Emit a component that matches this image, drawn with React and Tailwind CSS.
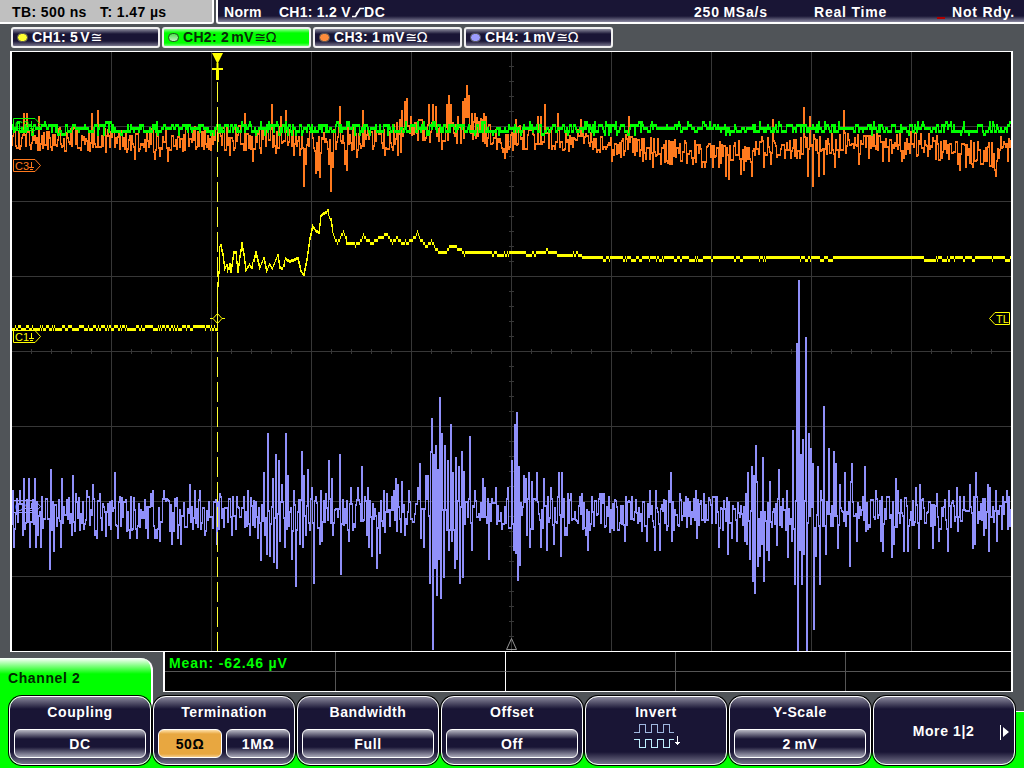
import { clsx } from "clsx";

const PLOT = { left: 12, top: 52, width: 1000, height: 599 };

// [x, y] extremes of each noisy trace, in screen coordinates
const CH4_TOPS = [
  [13, 490], [20, 490], [24, 478], [29, 478], [35, 478], [42, 496], [51, 469], [62, 478], [73, 475], [76, 493], [87, 490],
  [93, 484], [100, 493], [115, 472], [120, 496], [131, 496], [145, 499], [151, 493], [153, 490], [164, 490], [176, 505], [190, 484], [195, 490], [200, 490],
  [216, 499], [220, 493], [237, 496], [248, 490], [264, 472], [268, 433], [273, 478], [276, 454], [279, 460], [282, 484], [286, 433], [288, 475],
  [294, 490], [302, 451], [304, 475], [308, 469], [312, 487], [321, 490], [326, 493], [329, 460], [332, 478], [340, 454],
  [351, 487], [358, 487], [362, 466], [368, 487], [384, 490], [387, 493], [394, 490], [396, 478], [398, 484], [402, 481],
  [409, 490], [418, 487], [420, 463], [426, 475], [428, 475], [431, 451], [432, 418], [434, 454], [436, 445], [438, 469],
  [440, 397], [442, 433], [445, 445], [448, 460], [451, 424], [453, 472], [456, 457], [459, 466], [462, 451], [464, 471],
  [470, 436], [472, 478], [475, 490], [483, 478], [485, 487], [496, 487], [508, 487], [512, 460], [515, 424], [517, 412],
  [519, 466], [524, 475], [526, 478], [529, 472], [532, 481], [537, 472], [544, 478], [551, 487], [559, 472], [562, 472],
  [568, 493], [571, 493], [582, 493], [588, 502], [592, 496], [600, 493], [602, 493], [604, 493], [609, 496], [615, 499], [626, 496], [632, 496],
  [650, 490], [656, 490], [660, 478], [664, 499], [669, 490], [671, 472], [680, 493], [686, 496], [696, 490], [698, 499], [704, 493], [717, 496],
  [732, 478], [737, 481], [746, 493], [748, 472], [752, 466], [754, 475], [756, 445], [757, 481], [760, 487], [763, 457], [764, 460],
  [770, 481], [779, 469], [787, 490], [793, 430], [797, 343], [799, 280], [801, 454], [803, 439], [806, 337],
  [809, 433], [811, 448], [813, 463], [816, 448], [818, 466], [821, 490], [824, 406], [829, 448], [834, 451], [836, 463],
  [840, 484], [845, 472], [851, 481], [852, 463], [858, 502], [865, 466], [871, 499], [876, 490], [882, 496], [888, 496], [896, 478],
  [898, 490], [901, 499], [908, 478], [916, 487], [920, 484], [937, 493], [945, 499], [949, 490], [957, 487], [960, 496], [964, 496], [970, 484], [976, 472],
  [988, 484], [990, 487], [996, 490], [1003, 496], [1007, 490], [1009, 496],
];
const CH4_BOTTOMS = [
  [14, 546], [15, 528], [23, 534], [30, 546], [36, 546], [38, 534], [41, 546], [50, 568], [54, 550], [61, 546], [72, 534], [75, 530],
  [84, 528], [95, 534], [97, 537], [106, 535], [118, 537], [130, 537], [133, 528], [137, 537], [148, 537], [155, 537], [157, 537], [160, 540],
  [172, 543], [178, 537], [181, 543], [193, 528], [205, 534], [217, 543], [232, 534], [250, 534], [258, 537], [261, 559], [265, 534],
  [267, 553], [270, 555], [274, 561], [277, 567], [280, 540], [285, 546], [292, 558], [296, 585], [300, 543], [303, 546],
  [306, 534], [314, 582], [320, 543], [322, 540], [333, 534], [341, 573], [349, 540], [367, 534], [369, 546], [372, 555],
  [377, 567], [380, 552], [385, 531], [401, 531], [405, 534], [421, 537], [424, 546], [430, 582], [433, 648], [435, 567],
  [437, 594], [439, 558], [441, 597], [444, 576], [449, 549], [452, 540], [455, 567], [457, 558], [460, 582], [463, 576],
  [472, 549], [489, 558], [514, 549], [516, 552], [518, 579], [520, 564], [527, 534], [530, 546], [541, 546], [547, 549],
  [554, 543], [561, 555], [565, 534], [567, 534], [586, 534], [588, 549], [610, 531], [625, 540], [647, 540], [655, 549], [660, 549], [672, 540],
  [697, 537], [719, 546], [728, 553], [732, 537], [737, 540], [745, 540], [747, 543], [750, 558], [753, 580], [755, 592],
  [758, 565], [760, 555], [762, 543], [764, 580], [767, 549], [769, 559], [777, 544], [788, 556], [792, 540], [795, 583],
  [798, 651], [800, 549], [802, 583], [804, 553], [807, 651], [810, 515], [814, 628], [816, 555], [820, 583], [826, 553],
  [838, 547], [850, 565], [857, 540], [868, 528], [881, 540], [883, 550], [892, 556], [894, 543], [904, 550], [908, 550],
  [919, 547], [933, 547], [939, 540], [948, 550], [958, 530], [973, 547], [975, 543], [984, 534], [989, 550], [997, 540], [1002, 528], [1008, 528],
];
const CH3_PEAKS = [
  [24, 115], [27, 115], [39, 118], [92, 115], [98, 112], [245, 115], [272, 106], [281, 118], [286, 112], [340, 108], [363, 112],
  [402, 112], [405, 103], [407, 100], [411, 118], [429, 106], [433, 106], [436, 108], [447, 106], [449, 97], [451, 106],
  [458, 118], [463, 103], [465, 100], [467, 87], [469, 97], [472, 115], [475, 115], [484, 115], [486, 118], [516, 121],
  [538, 118], [541, 118], [545, 106], [558, 115], [581, 121], [629, 118], [773, 121], [804, 109], [808, 106], [810, 118], [844, 112],
  [16, 147], [21, 147], [32, 144], [48, 150], [51, 148], [57, 147], [72, 147], [88, 151], [93, 148], [120, 150], [128, 150],
  [135, 160], [140, 150], [144, 148], [155, 160], [160, 157], [168, 162], [196, 150], [211, 151], [230, 156], [253, 162],
  [261, 154], [276, 154], [294, 156], [300, 156], [304, 187], [306, 165], [316, 174], [318, 171], [320, 178], [329, 165],
  [331, 192], [333, 168], [345, 165], [347, 171], [357, 158], [373, 150], [385, 156], [388, 150], [393, 151], [398, 156], [401, 153],
  [418, 141], [425, 141], [442, 150], [457, 144], [461, 144], [493, 144], [497, 150], [503, 153], [505, 159], [507, 153],
  [523, 150], [527, 150], [535, 150], [552, 150], [565, 150], [576, 141], [593, 150], [600, 153], [606, 150], [612, 162],
  [614, 156], [624, 156], [635, 156], [643, 162], [653, 168], [661, 165], [667, 162], [670, 165], [672, 165], [681, 162],
  [693, 165], [702, 168], [705, 168], [713, 168], [719, 168], [726, 177], [729, 180], [741, 175], [744, 171], [752, 177],
  [764, 168], [771, 165], [785, 159], [797, 159], [808, 177], [813, 187], [819, 177], [824, 175], [835, 168], [859, 165],
  [869, 159], [883, 162], [889, 162], [902, 162], [904, 159], [918, 156], [942, 159], [958, 165], [960, 171], [966, 168],
  [973, 168], [983, 165], [993, 168], [995, 171], [996, 177], [1008, 162],
];
const CH3_CENTER = [
  [12, 137], [140, 140], [200, 138], [290, 136], [315, 142], [345, 138], [390, 136], [400, 131], [440, 130], [480, 127],
  [488, 135], [505, 141], [520, 136], [600, 142], [640, 147], [670, 151], [730, 152], [760, 148], [815, 145], [860, 143],
  [920, 143], [950, 149], [995, 154], [1003, 143], [1011, 146],
];
const CH1_POINTS = [
  [12, 328], [216, 328], [217, 320], [218, 284], [219, 271], [220, 246], [221, 244], [223, 253], [225, 268], [227, 264], [228, 270],
  [230, 263], [231, 270], [234, 251], [236, 251], [238, 270], [240, 255], [242, 242], [244, 253], [246, 269], [250, 263],
  [252, 266], [256, 251], [260, 267], [264, 257], [267, 270], [270, 263], [273, 267], [276, 259], [278, 254], [280, 266],
  [283, 267], [286, 257], [290, 260], [298, 257], [301, 269], [304, 273], [307, 258], [310, 237], [313, 224], [316, 229],
  [319, 231], [321, 215], [324, 212], [327, 211], [328, 209], [331, 220], [334, 235], [338, 243], [341, 237], [344, 231], [347, 242],
  [352, 244], [360, 245], [364, 236], [368, 242], [373, 244], [377, 239], [388, 236], [393, 242], [397, 239], [403, 242],
  [410, 242], [415, 239], [418, 233], [421, 239], [427, 248], [431, 242], [434, 244], [437, 251], [442, 254], [447, 251], [451, 248],
  [461, 249], [465, 254], [490, 253], [500, 255], [519, 252], [530, 256], [543, 251], [560, 254], [580, 254], [582, 257],
  [1011, 258],
];

function makeRandom(seed) {
  let s = seed;
  return () => {
    s = (s * 1664525 + 1013904223) >>> 0;
    return s / 4294967296;
  };
}

function lerp(points, x) {
  for (let i = 1; i < points.length; i++) {
    const [x0, y0] = points[i - 1];
    const [x1, y1] = points[i];
    if (x <= x1) return y0 + ((y1 - y0) * (x - x0)) / (x1 - x0);
  }
  return points[points.length - 1][1];
}

function sample(fn) {
  const values = [];
  for (let x = PLOT.left; x < PLOT.left + PLOT.width; x++) values.push(fn(x));
  return values;
}

// one vertical bar per pixel column; steps larger than `gap` are joined
// with the column before
function toPath(values, thickness, gap = 0) {
  let d = "";
  for (let i = 0; i < values.length; i++) {
    let prev = values[i - 1] ?? values[i];
    if (Math.abs(prev - values[i]) <= gap) prev = values[i];
    const from = Math.min(prev, values[i]);
    const to = Math.max(prev, values[i]) + thickness;
    d += `M${PLOT.left + i - 0.5} ${from}V${to}`;
  }
  return d;
}

function buildCh1() {
  const rnd = makeRandom(11);
  let high = false;
  return sample((x) => {
    const y = lerp(CH1_POINTS, x);
    if (x < 218) {
      if (rnd() > 0.6) high = !high;
      return high ? 325 : 328;
    }
    if (x > 582) {
      if (rnd() > (high ? 0.6 : 0.9)) high = !high;
      return high && (x < 840 || x > 890) ? 259 : 256;
    }
    if (x > 330) {
      if (rnd() > 0.75) high = !high;
      const jitter = x > 350 && high ? 1.5 : 0;
      return Math.round((y - jitter) / 3) * 3 - 1;
    }
    return Math.round(y);
  });
}

function buildCh2() {
  const rnd = makeRandom(5);
  let y = 127;
  return sample((x) => {
    if (rnd() > 0.3) {
      const r = rnd();
      y = r < 0.07 ? 121 : r < 0.36 ? 124 : r < 0.6 ? 127 : r < 0.93 ? 130 : 133;
      if (x < 720 && x > 640 && y > 127) y -= 3;
    }
    return y;
  });
}

function buildCh3() {
  const rnd = makeRandom(77);
  const peaks = new Map(CH3_PEAKS);
  let sign = 1;
  let offset = 0;
  return sample((x) => {
    if (peaks.has(x)) return peaks.get(x) - 2;
    if (rnd() > 0.2) {
      if (rnd() > 0.3) sign = -sign;
      offset = sign * rnd() * 12;
    }
    return Math.round(lerp(CH3_CENTER, x) + offset);
  });
}

function buildCh4() {
  const rnd = makeRandom(42);
  const peaks = new Map([...CH4_TOPS, ...CH4_BOTTOMS]);
  let sign = 1;
  let offset = 0;
  return sample((x) => {
    if (peaks.has(x)) return peaks.get(x);
    if (rnd() > 0.15) {
      if (rnd() > 0.3) sign = -sign;
      offset = sign * rnd() * 17;
    }
    return Math.round(513 + offset);
  });
}

const TRACES = [
  { name: "ch4", color: "#9090fa", d: toPath(buildCh4(), 2) },
  { name: "ch3", color: "#ff7a1e", d: toPath(buildCh3(), 2) },
  { name: "ch2", color: "#00ff00", d: toPath(buildCh2(), 3) },
  { name: "ch1", color: "#ffff00", d: toPath(buildCh1(), 3, 3) },
];

const VERTICALS = [111, 211, 311, 411, 511, 611, 711, 811, 911];
const HORIZONTALS = [126, 201, 276, 351, 426, 501, 576];

function Grid() {
  return (
    <g fill="#373737" shapeRendering="crispEdges">
      {VERTICALS.map((x) => (
        <rect key={x} x={x} y={52} width={1} height={599} />
      ))}
      {HORIZONTALS.map((y) => (
        <rect key={y} x={12} y={y} width={999} height={1} />
      ))}
      {Array.from({ length: 49 }, (_, i) => (
        <rect key={i} x={31 + i * 20} y={349} width={1} height={5} />
      ))}
      {Array.from({ length: 39 }, (_, i) => (
        <rect key={i} x={509} y={66 + i * 15} width={5} height={1} />
      ))}
    </g>
  );
}

function ChannelMarker({ label, y, color }) {
  return (
    <g stroke={color} fill="none" strokeWidth="1">
      <path d={`M13.5 ${y + 0.5}H35L40.5 ${y + 6.5}L35 ${y + 12.5}H13.5Z`} />
      <text x="15" y={y + 10.5} fontSize="11" fill={color} stroke="none">
        {label}
      </text>
      <path d={`M31.5 ${y + 3}V${y + 8}M29 ${y + 8.5}H34M30 ${y + 10.5}H33`} shapeRendering="crispEdges" />
    </g>
  );
}

function Plot() {
  return (
    <svg
      className="block bg-black font-['Liberation_Sans',Arial,sans-serif] font-normal tracking-normal"
      width={999}
      height={599}
      viewBox="12 52 999 599"
    >
      <Grid />
      {TRACES.map((t) => (
        <path key={t.name} d={t.d} stroke={t.color} fill="none" shapeRendering="crispEdges" />
      ))}
      <ChannelMarker label="C4" y={500} color="#9696ff" />
      <ChannelMarker label="C3" y={159} color="#ff7a1e" />
      <ChannelMarker label="C2" y={118} color="#00ff00" />
      <ChannelMarker label="C1" y={330} color="#ffff00" />

      {/* trigger position */}
      <path d="M217.5 82V651" stroke="#ffff30" strokeDasharray="20 5" shapeRendering="crispEdges" />
      <path d="M212 53H223L217.5 64Z" fill="#ffff00" />
      <path d="M217.5 63V68M212 69H223" stroke="#ffff00" strokeWidth="2" />
      <path d="M217.5 69V80" stroke="#ffff00" strokeWidth="3" />
      <path d="M210 318.5H213L217.5 313.5L222 318.5L217.5 323.5L213 318.5M222 318.5H225" stroke="#ffff00" fill="none" />

      {/* trigger level */}
      <path d="M1009.5 312.5H995L989.5 318.5L995 324.5H1009.5Z" stroke="#ffff00" fill="#000" />
      <text x="996" y="322.5" fontSize="11" fill="#ffff00">
        TL
      </text>
      <path d="M511.5 638.5L506.5 649.5H516.5Z" stroke="#969696" fill="none" />
    </svg>
  );
}

const CHANNELS = [
  { label: "CH1: 5", unit: "V", suffix: "≅", dot: "bg-[#ffff30]" },
  { label: "CH2: 2", unit: "mV", suffix: "≅Ω", dot: "border-[#205020] bg-[linear-gradient(#50e050,#c0f0c0)]", active: true },
  { label: "CH3: 1", unit: "mV", suffix: "≅Ω", dot: "bg-[#ff8c3c]" },
  { label: "CH4: 1", unit: "mV", suffix: "≅Ω", dot: "bg-[#9c9cff]" },
];

function ChannelChip({ label, unit, suffix, dot, active }) {
  return (
    <div
      className={clsx(
        "flex h-[21px] w-[149px] items-center rounded-[3px] border-2 border-[#f0f0f0] pl-[4px]",
        active
          ? "bg-[linear-gradient(#90ff90,#00ff00_4px,#00ff00_14px,#70ff70)] text-[#0a2a0a]"
          : "bg-[linear-gradient(#8a8a9c,#191535_5px,#191535_12px,#77758c)] text-white"
      )}
    >
      <span className={clsx("mr-[4px] h-[9px] w-[11px] rounded-full border border-[#555]", dot)} />
      <span>{label}</span>
      <span className="ml-[2px]">{unit}</span>
      <span className="ml-[1px] font-['DejaVu_Sans',sans-serif] text-[14px] font-normal tracking-[-0.5px]">{suffix}</span>
    </div>
  );
}

function StatusBar() {
  return (
    <header className="flex h-[24px] gap-[2px] leading-[24px]">
      <div className="flex w-[214px] rounded-br-[3px] border-r-2 border-b-2 border-white bg-[#c0c0c0] pl-[12px] text-black">
        <span className="w-[88px] tracking-[0.4px]">TB: 500 ns</span>
        <span className="tracking-[0.4px]">T: 1.47 µs</span>
      </div>
      <div className="flex flex-1 rounded-bl-[3px] border-b-2 border-l-2 border-white bg-[linear-gradient(#191535_16px,#8a88a0)] pl-[6px] text-white">
        <span className="w-[55px] tracking-[0.3px]">Norm</span>
        <span className="w-[73px] tracking-[0.25px]">CH1: 1.2 V</span>
        <svg className="mt-[7px]" width="12" height="11" viewBox="0 0 12 11" fill="none" stroke="white">
          <path d="M0 9.5H3.5L8 1.5H12M4 7L6.5 4" strokeWidth="1.6" />
        </svg>
        <span className="w-[330px]">DC</span>
        <span className="w-[120px] tracking-[0.8px]">250{"\u2009"}MSa/s</span>
        <span className="w-[123px] tracking-[0.8px]">Real Time</span>
        <span className="mt-[17px] mr-[7px] h-[2px] w-[8px] bg-[#b00000]" />
        <span className="tracking-[0.8px]">Not Rdy.</span>
      </div>
    </header>
  );
}

function Value({ children, selected, wide }) {
  return (
    <div
      className={clsx(
        "flex h-[29px] items-center justify-center rounded-[6px] border border-white pt-px",
        wide ? "w-[132px]" : "w-[64px]",
        selected
          ? "bg-[linear-gradient(#ffe0a8,#e8a740_4px,#e8a740_24px,#f4cc8c)] text-black"
          : "bg-[linear-gradient(#b8b8c4,#191535_9px,#191535_17px,#a8a8b8)]"
      )}
    >
      {children}
    </div>
  );
}

function SoftKey({ title, children }) {
  return (
    <div className="flex h-[69px] w-[142px] flex-col items-center rounded-[13px] border border-white bg-[linear-gradient(#8a889c,#191535_12px,#191535_55px,#77758c)] shadow-[0_0_0_1px_black]">
      {title && <div className="h-[32px] leading-[30px]">{title}</div>}
      {children}
    </div>
  );
}

function InvertIcon() {
  return (
    <svg width="48" height="26" viewBox="0 0 48 26" fill="none" shapeRendering="crispEdges">
      <path d="M0 9.5H5.5V1.5H11.5V9.5H17.5V1.5H23.5V9.5H29.5V1.5H35.5V9.5H40" stroke="#a0b8e0" />
      <path d="M0 16.5H5.5V24.5H11.5V16.5H17.5V24.5H23.5V16.5H29.5V24.5H35.5V16.5H40" stroke="#c0f0ff" />
      <path d="M43.5 13V22M41 19.5H46M42 20.5H45" stroke="white" />
    </svg>
  );
}

function Results() {
  return (
    <div className="ml-[10px] grid h-[41px] w-[850px] grid-cols-[171px_170px_170px_170px_1fr] grid-rows-2 border-y border-r-2 border-l-2 border-white bg-black">
      {Array.from({ length: 10 }, (_, i) => (
        <div
          key={i}
          className={clsx(
            "border-[#555]",
            i < 5 && "border-b",
            i % 5 !== 4 && "border-r",
            i % 5 === 1 && "border-r-white"
          )}
        >
          {i === 0 && (
            <div className="pl-[4px] leading-[22px] tracking-[0.9px] whitespace-nowrap text-[#00ff00]">
              Mean: -62.46 µV
            </div>
          )}
        </div>
      ))}
    </div>
  );
}

export default function App() {
  return (
    <div className="h-[768px] w-[1024px] overflow-hidden bg-[#505458] font-['Liberation_Sans',Arial,sans-serif] text-[14px] font-bold tracking-[0.6px] whitespace-pre">
      <StatusBar />
      <div className="flex h-[27px] gap-[2px] pt-[3px] pl-[11px] tracking-[0.3px]">
        {CHANNELS.map((c) => (
          <ChannelChip key={c.label} {...c} />
        ))}
      </div>

      <main className="ml-[10px] w-[1003px] border-t-2 border-r-2 border-l-2 border-white">
        <div className="-mt-px h-[599px]">
          <Plot />
        </div>
      </main>

      <footer className="grid grid-cols-[153px_1fr] grid-rows-[45px_72px] bg-[linear-gradient(#505458_60px,white_60px,white_61px,#00ff00_61px)]">
        <div className="col-span-2 col-start-1 row-start-1 ml-[10px] h-px w-[1003px] bg-white" />
        <div className="col-start-1 row-span-2 row-start-1 mt-[7px] h-[60px] rounded-tr-[12px] border-r-2 border-white bg-[linear-gradient(white,#00ff00_16px)] pt-[10px] pl-[8px] text-[#002800]">
          Channel 2
        </div>
        <div className="col-start-2 row-start-1">
          <Results />
        </div>
        <div className="col-span-2 col-start-1 row-start-2 flex gap-[2px] pl-[9px] text-white">
          <SoftKey title="Coupling">
            <Value wide>DC</Value>
          </SoftKey>
          <SoftKey title="Termination">
            <div className="flex gap-[4px]">
              <Value selected>50Ω</Value>
              <Value>1MΩ</Value>
            </div>
          </SoftKey>
          <SoftKey title="Bandwidth">
            <Value wide>Full</Value>
          </SoftKey>
          <SoftKey title="Offset">
            <Value wide>Off</Value>
          </SoftKey>
          <SoftKey title="Invert">
            <div className="-mt-[6px] pl-[4px]">
              <InvertIcon />
            </div>
          </SoftKey>
          <SoftKey title="Y-Scale">
            <Value wide>2{"\u2009"}mV</Value>
          </SoftKey>
          <SoftKey>
            <div className="flex h-full w-full items-center pt-[2px]">
              <span className="w-[126px] pl-[13px] text-center">More 1|2</span>
              <svg width="10" height="16" viewBox="0 0 10 16" fill="white">
                <path d="M0 1H1V16H0ZM3 3L9 8L3 13Z" />
              </svg>
            </div>
          </SoftKey>
        </div>
      </footer>
    </div>
  );
}
